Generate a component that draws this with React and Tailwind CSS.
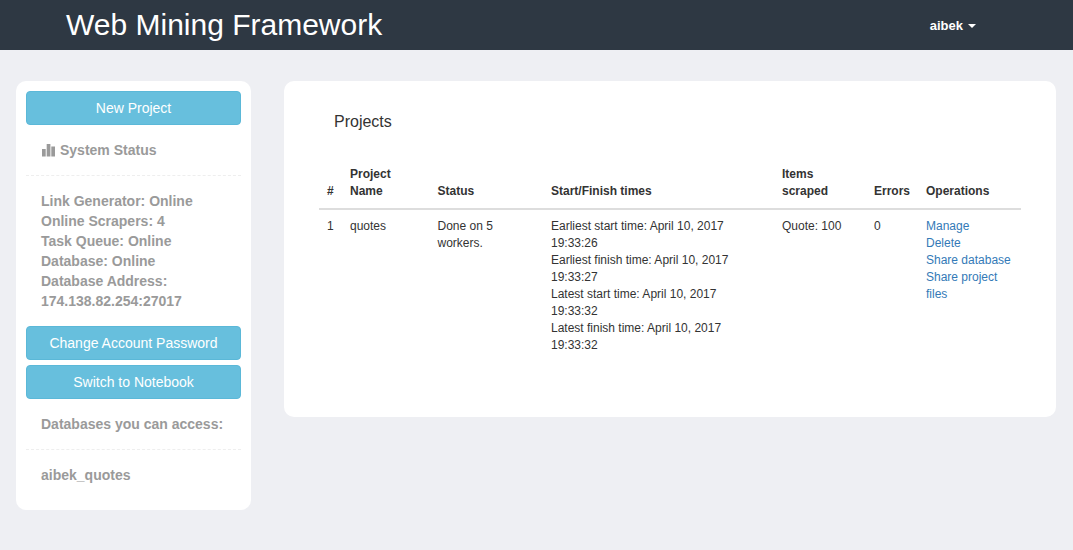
import React from "react";

const statusLines = [
  "Link Generator: Online",
  "Online Scrapers: 4",
  "Task Queue: Online",
  "Database: Online",
  "Database Address:",
  "174.138.82.254:27017",
];

const times = [
  "Earliest start time: April 10, 2017",
  "19:33:26",
  "Earliest finish time: April 10, 2017",
  "19:33:27",
  "Latest start time: April 10, 2017",
  "19:33:32",
  "Latest finish time: April 10, 2017",
  "19:33:32",
];

const SideButton = ({ children }) => (
  <button className="block w-full h-[34px] rounded-[4px] border border-[#5bb8d8] bg-[#67bfdd] text-[14px] leading-[20px] font-normal text-white text-center">
    {children}
  </button>
);

const App = () => {
  return (
    <div className="min-h-[550px] bg-[#eeeff3] font-['Liberation_Sans',Arial,sans-serif] text-[12px] leading-[17px] text-[#333333]">
      {/* --- Navbar --- */}
      <div className="h-[50px] bg-[#2e3843] flex items-center justify-between pl-[66px] pr-[97px]">
        <h1 className="text-[30px] leading-[50px] text-white">Web Mining Framework</h1>
        <div className="flex items-center gap-[5px] text-[13px] font-bold text-white">
          aibek
          <span className="mt-[1px] w-0 h-0 border-x-4 border-x-transparent border-t-4 border-t-white" />
        </div>
      </div>

      <div className="flex items-start pt-[31px] pl-4">
        {/* --- Sidebar --- */}
        <div className="w-[235px] h-[429px] bg-white rounded-[10px] p-[10px] text-[14px] leading-[20px] font-bold text-[#9a9a9a]">
          <SideButton>New Project</SideButton>
          <div className="flex items-center gap-[5px] pl-4 mt-[15px]">
            <svg width="13" height="13" viewBox="0 0 13 13" fill="#9a9a9a">
              <rect x="0" y="5" width="3.7" height="7.5" />
              <rect x="4.7" y="0" width="3.7" height="12.5" />
              <rect x="9.3" y="2.5" width="3.7" height="10" />
            </svg>
            System Status
          </div>
          <div className="mt-[15px] border-t border-dashed border-[#eeeeee]" />
          <div className="pl-[15px] mt-[15px]">
            {statusLines.map((line) => (
              <div key={line}>{line}</div>
            ))}
          </div>
          <div className="mt-[15px]">
            <SideButton>Change Account Password</SideButton>
          </div>
          <div className="mt-[5px]">
            <SideButton>Switch to Notebook</SideButton>
          </div>
          <div className="pl-[15px] mt-[15px]">Databases you can access:</div>
          <div className="mt-[15px] border-t border-dashed border-[#eeeeee]" />
          <div className="pl-[15px] mt-[15px]">aibek_quotes</div>
        </div>

        {/* --- Projects card --- */}
        <div className="ml-[33px] w-[772px] h-[336px] bg-white rounded-[10px] pl-[35px] pt-[31px]">
          <h2 className="pl-[15px] text-[16px] leading-[20px] font-normal">Projects</h2>
          <table className="mt-[26px] w-[702px] table-fixed border-collapse text-left">
            <colgroup>
              <col className="w-[23px]" />
              <col className="w-[87.5px]" />
              <col className="w-[113.5px]" />
              <col className="w-[231px]" />
              <col className="w-[92px]" />
              <col className="w-[52px]" />
              <col className="w-[103px]" />
            </colgroup>
            <thead>
              <tr className="border-b-2 border-[#dddddd] align-bottom">
                <th className="p-2">#</th>
                <th className="p-2">Project Name</th>
                <th className="p-2">Status</th>
                <th className="p-2">Start/Finish times</th>
                <th className="p-2">Items scraped</th>
                <th className="p-2">Errors</th>
                <th className="p-2">Operations</th>
              </tr>
            </thead>
            <tbody>
              <tr className="align-top">
                <td className="p-2">1</td>
                <td className="p-2">quotes</td>
                <td className="p-2">Done on 5 workers.</td>
                <td className="p-2">
                  {times.map((t, i) => (
                    <div key={i}>{t}</div>
                  ))}
                </td>
                <td className="p-2">Quote: 100</td>
                <td className="p-2">0</td>
                <td className="p-2 text-[#337ab7]">
                  <div>Manage</div>
                  <div>Delete</div>
                  <div>Share database</div>
                  <div>Share project files</div>
                </td>
              </tr>
            </tbody>
          </table>
        </div>
      </div>
    </div>
  );
};

export default App;
